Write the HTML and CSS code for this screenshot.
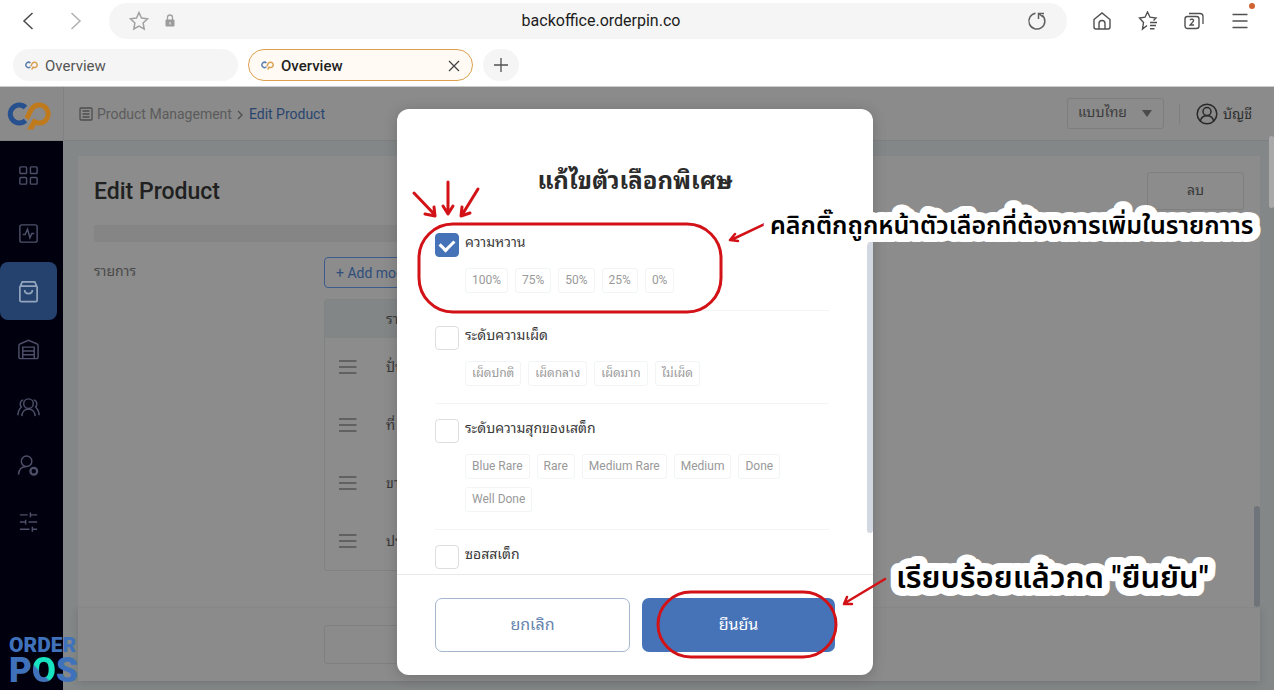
FILE: index.html
```html
<!DOCTYPE html>
<html lang="th">
<head>
<meta charset="utf-8">
<meta name="viewport" content="width=device-width, initial-scale=1">
<title>Overview</title>
<link rel="stylesheet" href="styles.css">
</head>
<body>
<svg class="defs" aria-hidden="true">
  <symbol id="op" viewBox="0 0 44 30">
    <path d="M18.500 6.500a9 9 0 1 0 0 13" fill="none" stroke="var(--op-blue)" stroke-width="5"/>
    <path d="M19.500 17.500C22 14 22.500 11 25 7.500a9 9 0 1 1 7 14.500c-2 0-3-.5-5-1.500" fill="none" stroke="var(--op-orange)" stroke-width="5"/>
    <path d="M20 28.500h6.500L30 21l-3.500-4z" fill="var(--op-orange)"/>
  </symbol>
  <symbol id="drag" viewBox="0 0 18 14"><path d="M0 1h17.500M0 7h17.500M0 13h17.500" stroke="#535353" stroke-width="1.300"/></symbol>
</svg>

<header class="browser">
  <div class="address-row">
    <button class="icon-btn nav" aria-label="Back"><svg width="12" height="18" viewBox="0 0 12 18"><path d="M10.500 1 2 9l8.500 8" stroke="#4a4a4a"/></svg></button>
    <button class="icon-btn nav" aria-label="Forward"><svg width="12" height="18" viewBox="0 0 12 18"><path d="m1.500 1 8.500 8-8.500 8" stroke="#b0b0b0"/></svg></button>
    <div class="address">
      <button class="icon-btn" aria-label="Bookmark"><svg width="20" height="20" viewBox="0 0 20 20"><path d="m10 1.500 2.500 5.500 6 .8-4.400 4.200 1.100 6L10 15l-5.200 3 1.100-6L1.500 7.800l6-.8z" stroke="#a2a2a2"/></svg></button>
      <svg class="lock" width="10" height="13" viewBox="0 0 10 13"><path d="M2.500 6V3.500a2.500 2.500 0 0 1 5 0V6" stroke="#a0a0a0" stroke-width="1.300"/><rect x=".5" y="5.500" width="9" height="7" rx="1" fill="#9c9c9c"/><path d="M5 8v2.500" stroke="#f5f5f5"/></svg>
      <span class="url">backoffice.orderpin.co</span>
      <button class="icon-btn" aria-label="Reload"><svg width="20" height="20" viewBox="0 0 20 20"><path d="M8.500 2.200a8 8 0 1 0 6.800 2M11.500 8V2.500H17M11.500 2.500 16 6" stroke="#626262" stroke-width="1.500"/></svg></button>
    </div>
    <div class="tools">
      <button class="icon-btn" aria-label="Home"><svg width="20" height="20" viewBox="0 0 20 20"><path d="M2 8.500 10 2l8 6.500V16a2 2 0 0 1-2 2H4a2 2 0 0 1-2-2zM7 18v-5.500a3 3 0 0 1 6 0V18" stroke="#505050" stroke-width="1.400"/></svg></button>
      <button class="icon-btn" aria-label="Bookmarks"><svg width="20" height="20" viewBox="0 0 20 20"><path d="M9 14.500 4.500 18l1-6.500L1.500 7l5.500-.8L9.500 1 12 6.200l6 .8-2.500 2.500M12 11.500h7M12 14.500h6M12 17.800h4.500" stroke="#505050" stroke-width="1.400"/></svg></button>
      <button class="icon-btn" aria-label="Tabs"><svg width="20" height="20" viewBox="0 0 20 20"><rect x="1" y="5.500" width="14" height="12" rx="2.500" stroke="#505050" stroke-width="1.400"/><path d="M5 2.500h11a3 3 0 0 1 3 3V13M6 9.200c1-1.500 4-1.200 3.600.5C9.400 11 7 12.500 6 14h4" stroke="#505050" stroke-width="1.300"/></svg></button>
      <button class="icon-btn menu" aria-label="Menu"><svg width="20" height="20" viewBox="0 0 20 20"><path d="M2.500 3.500h15M2.500 10h15M2.500 16.500h15" stroke="#505050" stroke-width="1.400"/></svg><span class="dot"></span></button>
    </div>
  </div>
  <nav class="tabs">
    <button class="tab"><svg class="fav" viewBox="0 0 44 30"><use href="#op"/></svg>Overview</button>
    <button class="tab current"><svg class="fav" viewBox="0 0 44 30"><use href="#op"/></svg>Overview<svg class="close" width="12" height="12" viewBox="0 0 12 12"><path d="m1 1 10 10M11 1 1 11" stroke="#444" stroke-width="1.300"/></svg></button>
    <button class="new-tab" aria-label="New tab"><svg width="16" height="16" viewBox="0 0 16 16"><path d="M8 1v14M1 8h14" stroke="#505050" stroke-width="1.300"/></svg></button>
  </nav>
</header>

<div class="app">
  <aside class="sidebar">
    <a class="brand" href="#" aria-label="OrderPin"><svg width="44" height="30"><use href="#op"/></svg></a>
    <nav class="side-nav">
      <a href="#" aria-label="Dashboard"><svg viewBox="0 0 24 24"><rect x="3" y="3" width="7" height="7" rx="1"/><rect x="14" y="3" width="7" height="7" rx="1"/><rect x="3" y="14" width="7" height="7" rx="1"/><rect x="14" y="14" width="7" height="7" rx="1"/></svg></a>
      <a href="#" aria-label="Activity"><svg viewBox="0 0 24 24"><rect x="3" y="3" width="18" height="18" rx="2"/><path d="M6 13h2.500L11 7.500l2.500 9 2-4.500H18"/></svg></a>
      <a href="#" class="active" aria-label="Products"><svg viewBox="0 0 24 24"><path d="M3 7.500 5.500 2h13L21 7.500V21a1.500 1.500 0 0 1-1.500 1.500h-15A1.500 1.500 0 0 1 3 21zM4 6.500h16M8 10.500c0 5 8 5 8 0"/></svg></a>
      <a href="#" aria-label="Inventory"><svg viewBox="0 0 24 24"><path d="M2 8q0-1.500 1.500-2L12 2.500 20.500 6Q22 6.500 22 8v11.500a2 2 0 0 1-2 2H4a2 2 0 0 1-2-2zM6 21V9.500h12V21M6 13.500h12M6 17.500h12"/></svg></a>
      <a href="#" aria-label="Customers"><svg viewBox="0 0 24 24"><circle cx="12" cy="8" r="5"/><path d="M5 21c.5-10 13.500-10 14 0M6.500 4C2.500 5 3 10 4.500 11.500 2 14 1 17 1 20M17.500 4c4 1 3.500 6 2 7.500C22 14 23 17 23 20"/></svg></a>
      <a href="#" aria-label="Staff"><svg viewBox="0 0 24 24"><circle cx="10" cy="7.500" r="5.500"/><path d="M1.500 21.500c.5-6 4-8.500 8.500-8.500"/><circle cx="17.500" cy="18" r="3.500" stroke-width="2.400"/></svg></a>
      <a href="#" aria-label="Settings"><svg viewBox="0 0 24 24"><path d="M3 3h8M14 .5v5M14 3h7M3 10.500h6M9 8v5M12 10.500h9M3 18h10M16 15.500v5M16 18h5"/></svg></a>
    </nav>
  </aside>

  <div class="page">
    <div class="topbar">
      <svg class="list-icon" width="14" height="14" viewBox="0 0 14 14"><rect x="1" y="1" width="12" height="12" rx="1"/><path d="M3.500 4h7M3.500 7h7M3.500 10h7"/></svg>
      <a class="crumb" href="#">Product Management</a>
      <svg class="chev" width="6" height="10" viewBox="0 0 6 10"><path d="m1 1 4 4-4 4"/></svg>
      <a class="crumb here" href="#">Edit Product</a>
      <div class="lang">
        <select aria-label="ภาษา"><option>แบบไทย</option></select>
        <svg class="caret" width="10" height="7" viewBox="0 0 10 7"><path d="M0 0h10L5 7z"/></svg>
      </div>
      <button class="account"><svg width="22" height="22" viewBox="0 0 22 22"><circle cx="11" cy="11" r="9.800"/><circle cx="11" cy="8.500" r="4"/><path d="M4.500 18c1-7 12-7 13 0"/></svg>บัญชี</button>
    </div>

    <main class="main">
      <section class="card">
        <div class="card-head"><h1>Edit Product</h1><button class="delete">ลบ</button></div>
        <div class="strip"></div>
        <div class="field">
          <span class="label">รายการ</span>
          <div class="field-body">
            <button class="add">+ Add modifier</button>
            <table class="items">
              <thead><tr><th></th><th>รายการ</th></tr></thead>
              <tbody>
                <tr><td><svg width="18" height="14"><use href="#drag"/></svg></td><td>ปั่น</td></tr>
                <tr><td><svg width="18" height="14"><use href="#drag"/></svg></td><td>ที่</td></tr>
                <tr><td><svg width="18" height="14"><use href="#drag"/></svg></td><td>ขา</td></tr>
                <tr><td><svg width="18" height="14"><use href="#drag"/></svg></td><td>ปร</td></tr>
              </tbody>
            </table>
          </div>
        </div>
        <span class="card-scroll"></span>
      </section>
      <section class="foot"><button class="foot-btn" aria-label="ยกเลิก"></button></section>
    </main>
  </div>

  <span class="page-scroll"></span>

  <div class="backdrop">
    <div class="modal" role="dialog" aria-labelledby="dlg-title">
      <h2 id="dlg-title">แก้ไขตัวเลือกพิเศษ</h2>
      <div class="options">
        <div class="option">
          <label><input type="checkbox" checked>ความหวาน</label>
          <div class="chips"><span>100%</span><span>75%</span><span>50%</span><span>25%</span><span>0%</span></div>
        </div>
        <div class="option">
          <label><input type="checkbox">ระดับความเผ็ด</label>
          <div class="chips"><span>เผ็ดปกติ</span><span>เผ็ดกลาง</span><span>เผ็ดมาก</span><span>ไม่เผ็ด</span></div>
        </div>
        <div class="option">
          <label><input type="checkbox">ระดับความสุกของเสต็ก</label>
          <div class="chips"><span>Blue Rare</span><span>Rare</span><span>Medium Rare</span><span>Medium</span><span>Done</span><span>Well Done</span></div>
        </div>
        <div class="option">
          <label><input type="checkbox">ซอสสเต็ก</label>
        </div>
      </div>
      <div class="actions"><button class="cancel">ยกเลิก</button><button class="confirm">ยืนยัน</button></div>
      <span class="modal-scroll"></span>

      <svg class="notes">
        <g class="marks">
          <rect x="22" y="115" width="302" height="88" rx="34"/>
          <rect x="261" y="483" width="178" height="65" rx="33"/>
          <path d="m17 84 21 22M28 105l10 2-1-9"/>
          <path d="M51 73v31M46 97l5 8 5-8"/>
          <path d="M81 80 65 106M65 98l-1 9 9-3"/>
          <path class="thin" d="m368 115-34 16M338 125l-5 6 8 1"/>
          <path class="thin" d="m488 470-40 24M450 488l-3 7 8 0"/>
        </g>
        <text x="373" y="125" class="note">คลิกติ๊กถูกหน้าตัวเลือกที่ต้องการเพิ่มในรายกาาร</text>
        <text x="499" y="479" class="note large">เรียบร้อยแล้วกด "ยืนยัน"</text>
      </svg>
    </div>
  </div>

  <div class="watermark"><span>ORDER</span><strong>P<em>O</em>S</strong></div>
</div>
</body>
</html>
```
FILE: styles.css
```css
:root {
  --op-blue: #27508f;
  --op-orange: #c07a1e;
}
* { box-sizing: border-box; }
body {
  margin: 0;
  height: 100vh;
  display: flex;
  flex-direction: column;
  overflow: hidden;
  background: #fff;
  font-family: Roboto, "Noto Sans Thai Looped", Loma, Waree, Garuda, "Noto Sans", sans-serif;
  font-size: 14px;
  color: #333;
}
button, select { font: inherit; color: inherit; }
button { padding: 0; border: 0; background: none; }
a { color: inherit; text-decoration: none; }
svg { display: block; fill: none; flex: none; }
.defs { width: 0; height: 0; position: absolute; }

/* Browser bars */
.browser { flex: none; height: 87px; border-bottom: 1px solid #ccc; }
.address-row { display: flex; align-items: center; height: 40px; padding: 1px 24px 0 22px; }
.icon-btn svg { stroke-width: 1.5; }
.nav { margin-right: 36px; }
.nav + .nav { margin-right: 27px; }
.address {
  flex: 1;
  display: flex;
  align-items: center;
  height: 36px;
  padding: 0 20px;
  border-radius: 18px;
  background: #f5f5f5;
}
.lock { margin-left: 16px; }
.url { flex: 1; text-align: center; font-size: 16px; color: #1c1c1c; }
.tools { display: flex; gap: 26px; padding-left: 25px; }
.menu { position: relative; }
.dot { position: absolute; right: -5px; top: -8px; width: 6px; height: 6px; border-radius: 50%; background: #cf6231; }
.tabs { display: flex; align-items: center; gap: 10px; padding: 9px 13px 0; }
.tab {
  width: 225px;
  height: 32px;
  display: flex;
  align-items: center;
  gap: 7px;
  padding: 1px 12px 0;
  border-radius: 16px;
  background: #f5f5f5;
  font-size: 15px;
  color: #555;
}
.tab.current { background: #fffbf4; border: 1px solid #dda050; color: #1f1f1f; font-weight: 500; }
.fav { width: 13px; height: 9px; --op-blue: #5d7fae; --op-orange: #daa052; }
.close { margin-left: auto; }
.new-tab { width: 36px; height: 32px; border-radius: 16px; background: #f5f5f5; display: grid; place-items: center; }

/* Application shell */
.app { flex: 1; min-height: 0; display: flex; position: relative; background: #848787; }
.sidebar { width: 63px; flex: none; background: #00000f; }
.brand { height: 54px; display: flex; align-items: center; padding: 4px 0 0 7px; background: #8a8a8a; border-bottom: 1px solid #7d8080; }
.side-nav { display: flex; flex-direction: column; padding: 5px 6px 0 0; }
.side-nav a { height: 58px; width: 57px; display: grid; place-items: center; border-radius: 8px; }
.side-nav svg { width: 23px; height: 23px; stroke: #4d5068; stroke-width: 1.5; overflow: visible; }
.side-nav .active { background: #25426f; }
.side-nav .active svg { stroke: #93a5bd; stroke-width: 1.800; }
.page { flex: 1; min-width: 0; display: flex; flex-direction: column; }
.topbar {
  flex: none;
  height: 54px;
  display: flex;
  align-items: center;
  padding: 0 22px 0 15px;
  background: #8b8b8b;
  border-left: 1px solid #7f8282;
  border-bottom: 1px solid #7e8181;
}
.list-icon, .chev { stroke: #4e4e4e; stroke-width: 1.3; }
.crumb { margin-left: 4px; color: #5b5b5b; }
.chev { margin: 2px 2px 0 5px; }
.crumb.here { color: #294670; }
.lang { position: relative; margin-left: auto; }
.lang select {
  appearance: none;
  width: 97px;
  height: 31px;
  padding: 0 10px 3px;
  border: 1px solid #7d7d7d;
  border-radius: 3px;
  background: none;
  color: #3c3c3c;
}
.caret { position: absolute; right: 12px; top: 12px; fill: #4b4b4b; }
.account { display: flex; align-items: center; gap: 5px; margin-left: 15px; padding-left: 16px; height: 20px; line-height: 16px; border-left: 1px solid #7f7f7f; color: #303030; }
.account svg { stroke: #292929; stroke-width: 1.5; }

.main { flex: 1; min-height: 0; display: flex; flex-direction: column; padding: 15px 14px 9px 15px; }
.card { position: relative; flex: 1; min-height: 0; padding: 16px; background: #8c8c8c; }
.card-head { display: flex; justify-content: space-between; height: 53px; }
h1 { margin: 6px 0 0; font-size: 23px; line-height: 28px; font-weight: 500; color: #202020; }
.delete { width: 97px; height: 38px; padding-bottom: 5px; border: 1px solid #7f7f7f; border-radius: 3px; color: #383838; }
.strip { height: 17px; background: #858585; }
.field { display: flex; padding-top: 15px; }
.label { width: 230px; line-height: 28px; color: #484848; }
.add { display: block; height: 31px; padding: 0 11px; border: 1px solid #3c5c8b; border-radius: 4px; color: #2f4e7c; }
.items { width: 480px; margin-top: 11px; border-collapse: separate; border-spacing: 0; border: 1px solid #7f8383; border-radius: 3px; color: #383838; }
.items th { height: 38px; background: #838686; text-align: left; font-weight: 400; padding: 0 0 4px; }
.items td { height: 58px; padding: 0 0 4px; }
.items td:first-child, .items th:first-child { width: 61px; padding: 0 0 0 14px; }
.card-scroll { position: absolute; right: 0; bottom: 0; width: 6px; height: 101px; border-radius: 3px; background: #6e7479; }
.foot { height: 74px; flex: none; padding: 17px 0 0 246px; background: #8b8b8b; border-top: 1px solid #878787; box-shadow: 0 2px 8px #00000022; }
.foot-btn { width: 195px; height: 39px; border: 1px solid #808080; border-radius: 3px; }
.page-scroll { position: absolute; right: 0; top: 49px; width: 5px; height: 72px; border-radius: 3px; background: #a9a9a9; }

/* Dialog */
.backdrop { position: absolute; inset: 0; display: flex; justify-content: center; align-items: flex-start; padding: 22px 4px 0 0; }
.modal { position: relative; width: 476px; border-radius: 12px; background: #fff; box-shadow: 0 2px 14px #00000030; }
h2 { margin: 0; padding-top: 54px; line-height: 36px; font-size: 24px; font-weight: 700; text-align: center; color: #2b2b2b; }
.options { height: 375px; overflow: hidden; padding: 19px 44px 0 38px; }
.option { padding: 15px 0 17px; border-bottom: 1px solid #f1f5f5; }
.option label { display: flex; align-items: flex-start; gap: 6px; height: 24px; line-height: 18px; color: #3a3a3a; }
.option input { appearance: none; width: 24px; height: 24px; margin: 0; border: 1px solid #dedede; border-radius: 4px; background: #fff; }
.option input:checked { border-color: #4673b8; background: #4673b8; display: grid; place-items: center; }
.option input:checked::before { content: ""; width: 11px; height: 7px; margin-bottom: 3px; border: solid #fff; border-width: 0 0 3px 3px; transform: rotate(-45deg); }
.chips { display: flex; flex-wrap: wrap; gap: 8px 7px; padding: 11px 0 0 30px; }
.chips span { height: 25px; padding: 0 6px; border: 1px solid #f1f5f5; border-radius: 3px; font-size: 12px; line-height: 22px; color: #999; }
.actions { display: flex; gap: 12px; padding: 23px 38px; border-top: 1px solid #e9e9e9; }
.actions button { flex: 1; height: 54px; padding-bottom: 4px; border-radius: 7px; font-size: 16px; }
.cancel { border: 1px solid #a5b6cd; color: #6583ad; }
.confirm { background: #4673b8; color: #fff; }
.modal-scroll { position: absolute; right: 0; top: 124px; width: 6px; height: 300px; border-radius: 3px; background: #d2d8e2; }

/* Tutorial notes drawn over the dialog */
.notes { position: absolute; inset: 0; width: 100%; height: 100%; overflow: visible; pointer-events: none; }
.marks { stroke: #d21217; stroke-width: 3; stroke-linecap: round; stroke-linejoin: round; }
.marks .thin { stroke-width: 2.5; }
.note { font-family: Roboto, "Noto Sans Thai", "Noto Sans", sans-serif; font-size: 25px; font-weight: 600; fill: #000; stroke: #fff; stroke-width: 16px; stroke-linejoin: round; paint-order: stroke; }
.note.large { font-size: 31px; }

.watermark { position: absolute; left: 9px; bottom: 4px; display: flex; flex-direction: column; font-weight: 900; color: #3f72bb; }
.watermark span { font-size: 21px; line-height: 20px; }
.watermark strong { font-size: 35px; line-height: 31px; font-weight: 900; }
.watermark em { font-style: normal; color: transparent; background: linear-gradient(225deg, #17e3c0 55%, #3f72bb 60%); background-clip: text; -webkit-background-clip: text; }
```
